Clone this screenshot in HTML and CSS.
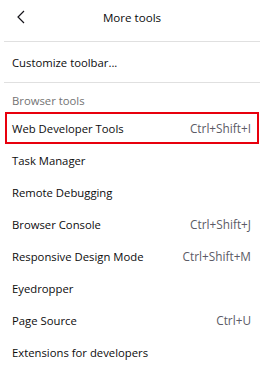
FILE: index.html
```html
<!DOCTYPE html>
<html lang="en">
<head>
    <meta charset="UTF-8">
    <meta name="viewport" content="width=device-width, initial-scale=1.0">
    <title>More tools</title>
    <link rel="stylesheet" href="styles.css">
</head>
<body>
    <div class="panel">
        <div class="header">
            <button class="back" aria-label="Back">
                <svg width="10" height="14" viewBox="0 0 10 14">
                    <path d="M8 1 L2 7 L8 13" fill="none" stroke="#15141a" stroke-width="1.2"/>
                </svg>
            </button>
            <span class="title">More tools</span>
        </div>

        <div class="divider"></div>

        <div class="item item-tall">Customize toolbar...</div>

        <div class="divider"></div>

        <div class="section-label">Browser tools</div>

        <div class="item highlighted">
            <span>Web Developer Tools</span>
            <span class="shortcut">Ctrl+Shift+I</span>
        </div>
        <div class="item"><span>Task Manager</span></div>
        <div class="item"><span>Remote Debugging</span></div>
        <div class="item">
            <span>Browser Console</span>
            <span class="shortcut">Ctrl+Shift+J</span>
        </div>
        <div class="item">
            <span>Responsive Design Mode</span>
            <span class="shortcut">Ctrl+Shift+M</span>
        </div>
        <div class="item"><span>Eyedropper</span></div>
        <div class="item">
            <span>Page Source</span>
            <span class="shortcut">Ctrl+U</span>
        </div>
        <div class="item"><span>Extensions for developers</span></div>
    </div>
</body>
</html>
```

FILE: styles.css
```css
body {
    margin: 0;
    background-color: #ffffff;
    font-family: 'Open Sans', 'Noto Sans', sans-serif;
    font-size: 11.3px;
    color: #0c0c0d;
}

.panel {
    width: 264px;
}

.header {
    position: relative;
    height: 35px;
    display: flex;
    align-items: center;
    justify-content: center;
}

.back {
    position: absolute;
    left: 16px;
    top: 10px;
    padding: 0;
    border: none;
    background: none;
    line-height: 0;
}

.title {
    font-size: 11.6px;
}

.divider {
    height: 1px;
    margin: 0 4px;
    background-color: #e0e0e0;
}

.header + .divider {
    margin-top: 6px;
}

.item {
    height: 32px;
    display: flex;
    align-items: center;
    justify-content: space-between;
    padding: 0 13px 0 12px;
}

.item-tall {
    height: 40px;
}

.section-label {
    height: 29px;
    display: flex;
    align-items: center;
    padding-left: 12px;
    padding-top: 5px;
    box-sizing: border-box;
    color: #737373;
}

.item.highlighted {
    margin: 0 5px;
    border: 2px solid #e8000d;
    height: 28px;
    padding: 0 6px 0 5px;
}

.shortcut {
    font-size: 11.8px;
    color: #5b5b66;
}
```
